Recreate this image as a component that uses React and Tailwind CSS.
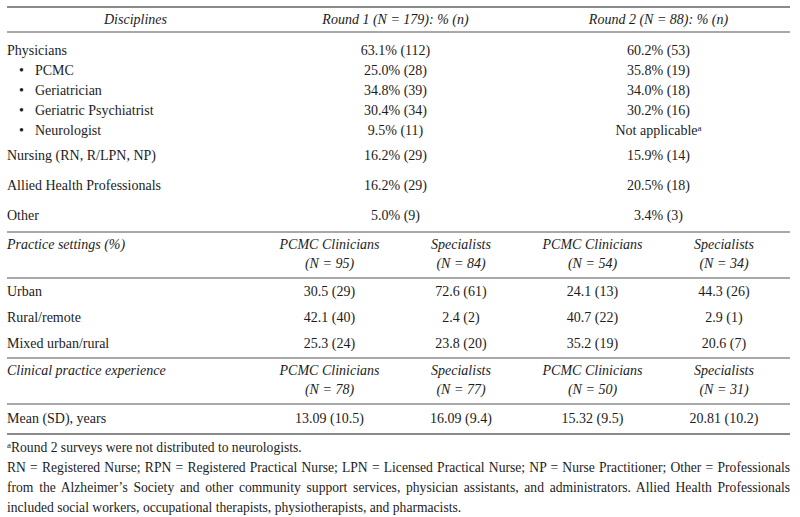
import React from "react";

const physicians = [
  ["PCMC", "25.0% (28)", "35.8% (19)"],
  ["Geriatrician", "34.8% (39)", "34.0% (18)"],
  ["Geriatric Psychiatrist", "30.4% (34)", "30.2% (16)"],
  ["Neurologist", "9.5% (11)", null],
];

const disciplines = [
  ["Nursing (RN, R/LPN, NP)", "16.2% (29)", "15.9% (14)"],
  ["Allied Health Professionals", "16.2% (29)", "20.5% (18)"],
  ["Other", "5.0% (9)", "3.4% (3)"],
];

const settings = [
  ["Urban", "30.5 (29)", "72.6 (61)", "24.1 (13)", "44.3 (26)"],
  ["Rural/remote", "42.1 (40)", "2.4 (2)", "40.7 (22)", "2.9 (1)"],
  ["Mixed urban/rural", "25.3 (24)", "23.8 (20)", "35.2 (19)", "20.6 (7)"],
];

const SubHead = ({ title, n }) => (
  <tr className="border-b-2 border-[#a8a8a8] italic leading-[19px] align-top">
    <td className="pt-[2px] pb-[4px]">{title}</td>
    {n.map((v, i) => (
      <td key={i} className="pt-[2px] pb-[4px] text-center">
        {i % 2 === 0 ? "PCMC Clinicians" : "Specialists"}
        <br />
        (N = {v})
      </td>
    ))}
  </tr>
);

export default function App() {
  return (
    <div className="w-[800px] h-[517px] bg-white px-[7px] pt-[6px] text-[14px] text-[#1c1c1c] [font-family:Liberation_Serif,Times_New_Roman,serif]">
      <table className="w-[783px] table-fixed">
        <colgroup>
          <col className="w-[257px]" />
          <col className="w-[131px]" />
          <col className="w-[132px]" />
          <col className="w-[131px]" />
          <col className="w-[132px]" />
        </colgroup>
        <tbody>
          <tr className="border-t-2 border-b-2 border-t-[#8a8a8a] border-b-[#a8a8a8] italic">
            <td className="h-[25px] text-center">Disciplines</td>
            <td colSpan={2} className="text-center">Round 1 (N = 179): % (n)</td>
            <td colSpan={2} className="text-center">Round 2 (N = 88): % (n)</td>
          </tr>
          <tr className="leading-5">
            <td className="pt-[8px]">Physicians</td>
            <td colSpan={2} className="pt-[8px] text-center">63.1% (112)</td>
            <td colSpan={2} className="pt-[8px] text-center">60.2% (53)</td>
          </tr>
          {physicians.map(([name, r1, r2]) => (
            <tr key={name} className="leading-5">
              <td>
                <span className="inline-block w-[16px] pl-[12px] mr-[12px]">•</span>
                {name}
              </td>
              <td colSpan={2} className="text-center">{r1}</td>
              <td colSpan={2} className="text-center">
                {r2 ?? (
                  <>
                    Not applicable<sup className="text-[9px]">a</sup>
                  </>
                )}
              </td>
            </tr>
          ))}
          {disciplines.map(([name, r1, r2], i) => (
            <tr
              key={name}
              className={`leading-5 ${i === 2 ? "border-b-2 border-[#a8a8a8]" : ""}`}
            >
              <td className="py-[5px]">{name}</td>
              <td colSpan={2} className="py-[5px] text-center">{r1}</td>
              <td colSpan={2} className="py-[5px] text-center">{r2}</td>
            </tr>
          ))}
          <SubHead title="Practice settings (%)" n={[95, 84, 54, 34]} />
          {settings.map(([name, ...vals], i) => (
            <tr
              key={name}
              className={`leading-5 ${i === 2 ? "border-b-2 border-[#a8a8a8]" : ""}`}
            >
              <td className="py-[3px]">{name}</td>
              {vals.map((v, j) => (
                <td key={j} className="py-[3px] text-center">{v}</td>
              ))}
            </tr>
          ))}
          <SubHead title="Clinical practice experience" n={[78, 77, 50, 31]} />
          <tr className="leading-5 border-b-2 border-[#8a8a8a]">
            <td className="py-[4px]">Mean (SD), years</td>
            <td className="py-[4px] text-center">13.09 (10.5)</td>
            <td className="py-[4px] text-center">16.09 (9.4)</td>
            <td className="py-[4px] text-center">15.32 (9.5)</td>
            <td className="py-[4px] text-center">20.81 (10.2)</td>
          </tr>
        </tbody>
      </table>
      <div className="w-[783px] mt-[3px] leading-5 text-[13.6px]">
        <div>
          <sup className="text-[9px]">a</sup>Round 2 surveys were not distributed to neurologists.
        </div>
        <div className="[text-align-last:justify]">
          RN = Registered Nurse; RPN = Registered Practical Nurse; LPN = Licensed Practical Nurse; NP = Nurse Practitioner; Other = Professionals
        </div>
        <div className="[text-align-last:justify]">
          from the Alzheimer’s Society and other community support services, physician assistants, and administrators. Allied Health Professionals
        </div>
        <div>
          included social workers, occupational therapists, physiotherapists, and pharmacists.
        </div>
      </div>
    </div>
  );
}
